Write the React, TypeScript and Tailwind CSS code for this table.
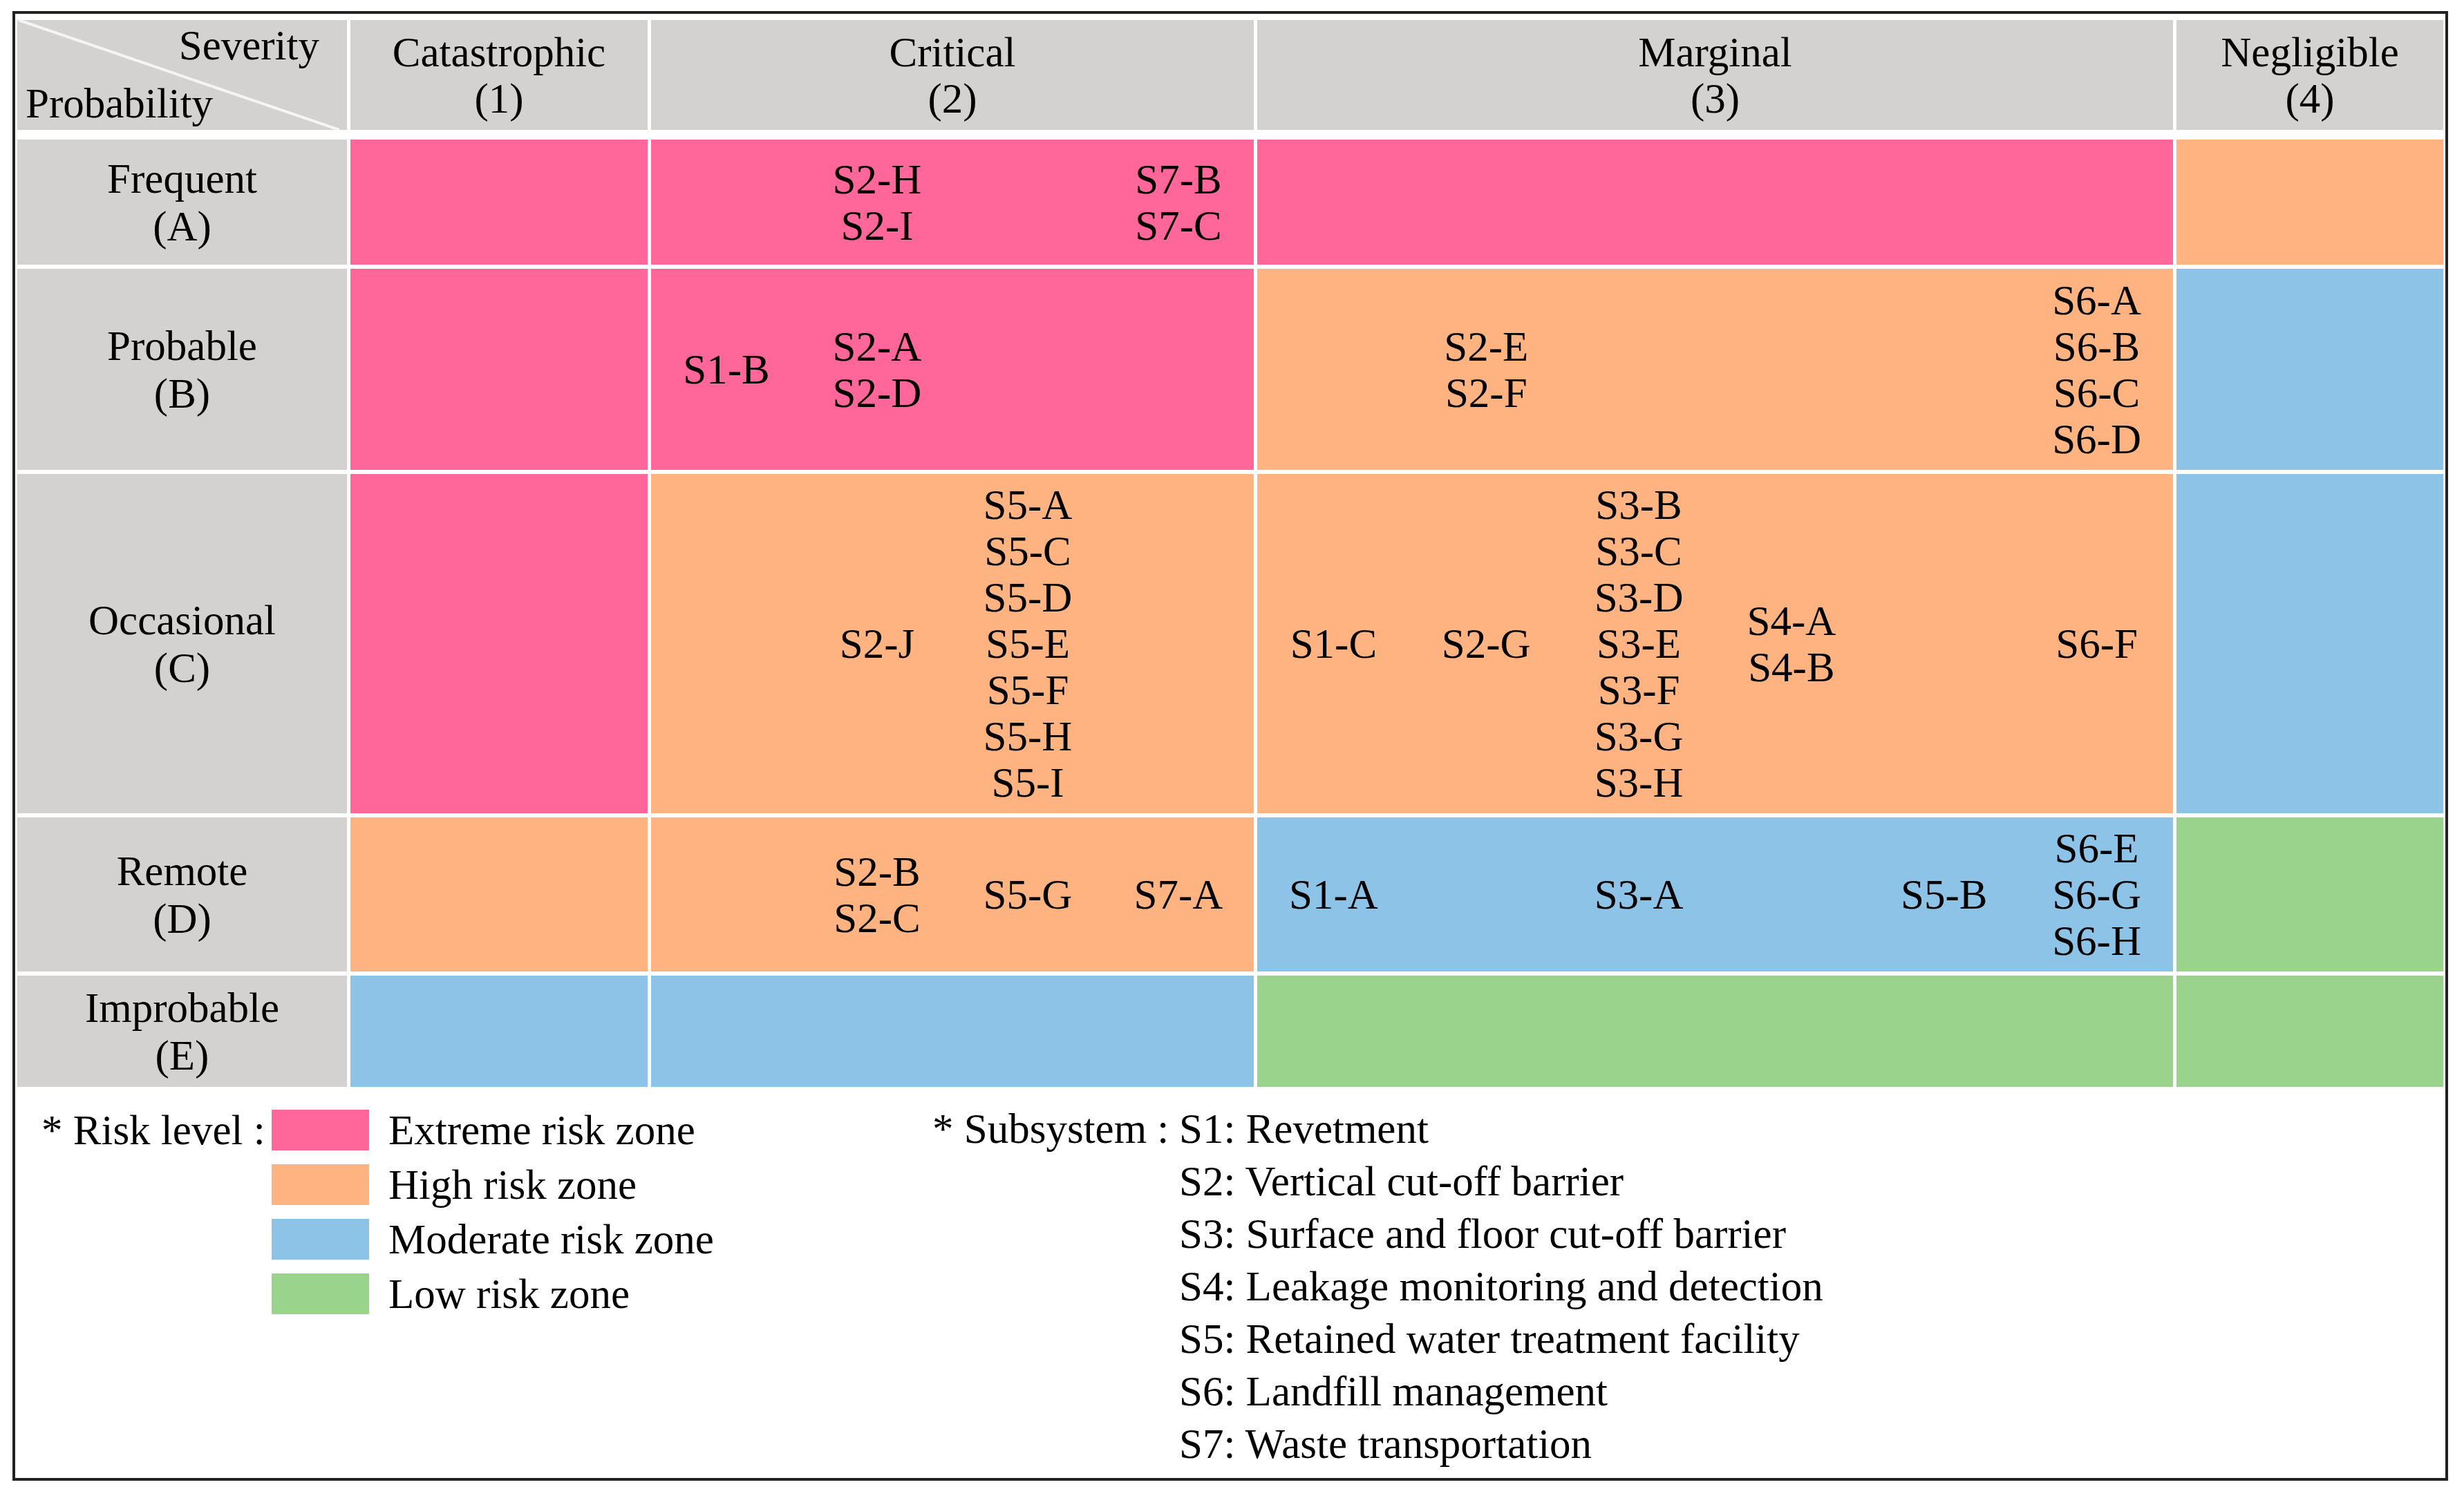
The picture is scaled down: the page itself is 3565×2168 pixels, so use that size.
import React from "react";

const PINK = "bg-[#ff6699]";
const ORANGE = "bg-[#ffb380]";
const BLUE = "bg-[#8dc3e6]";
const GREEN = "bg-[#99d38c]";
const GRAY = "bg-[#d3d2d1]";

const COLS = "grid grid-cols-[477px_430px_872px_1325px_386px] gap-x-[5px]";

type Row = {
  label: string;
  letter: string;
  cat: string;
  crit: string;
  critSubs: string[][];
  marg: string;
  margSubs: string[][];
  negl: string;
};

const rows: Row[] = [
  {
    label: "Frequent",
    letter: "(A)",
    cat: PINK,
    crit: PINK,
    critSubs: [[], ["S2-H", "S2-I"], [], ["S7-B", "S7-C"]],
    marg: PINK,
    margSubs: [[], [], [], [], [], []],
    negl: ORANGE,
  },
  {
    label: "Probable",
    letter: "(B)",
    cat: PINK,
    crit: PINK,
    critSubs: [["S1-B"], ["S2-A", "S2-D"], [], []],
    marg: ORANGE,
    margSubs: [[], ["S2-E", "S2-F"], [], [], [], ["S6-A", "S6-B", "S6-C", "S6-D"]],
    negl: BLUE,
  },
  {
    label: "Occasional",
    letter: "(C)",
    cat: PINK,
    crit: ORANGE,
    critSubs: [[], ["S2-J"], ["S5-A", "S5-C", "S5-D", "S5-E", "S5-F", "S5-H", "S5-I"], []],
    marg: ORANGE,
    margSubs: [
      ["S1-C"],
      ["S2-G"],
      ["S3-B", "S3-C", "S3-D", "S3-E", "S3-F", "S3-G", "S3-H"],
      ["S4-A", "S4-B"],
      [],
      ["S6-F"],
    ],
    negl: BLUE,
  },
  {
    label: "Remote",
    letter: "(D)",
    cat: ORANGE,
    crit: ORANGE,
    critSubs: [[], ["S2-B", "S2-C"], ["S5-G"], ["S7-A"]],
    marg: BLUE,
    margSubs: [["S1-A"], [], ["S3-A"], [], ["S5-B"], ["S6-E", "S6-G", "S6-H"]],
    negl: GREEN,
  },
  {
    label: "Improbable",
    letter: "(E)",
    cat: BLUE,
    crit: BLUE,
    critSubs: [[], [], [], []],
    marg: GREEN,
    margSubs: [[], [], [], [], [], []],
    negl: GREEN,
  },
];

const rowHeights = ["h-[181px]", "h-[291px]", "h-[491px]", "h-[223px]", "h-[161px]"];

function Sub({ items }: { items: string[] }) {
  return (
    <div className="flex flex-col items-center justify-center leading-[67px]">
      {items.map((t) => (
        <span key={t} className="whitespace-nowrap">
          {t}
        </span>
      ))}
    </div>
  );
}

function HeaderCell({ title, num }: { title: string; num: string }) {
  return (
    <div className={`${GRAY} flex flex-col items-center justify-center leading-[67px]`}>
      <span>{title}</span>
      <span>{num}</span>
    </div>
  );
}

const legend = [
  { c: PINK, t: "Extreme risk zone" },
  { c: ORANGE, t: "High risk zone" },
  { c: BLUE, t: "Moderate risk zone" },
  { c: GREEN, t: "Low risk zone" },
];

const subsystems = [
  "S1: Revetment",
  "S2: Vertical cut-off barrier",
  "S3: Surface and floor cut-off barrier",
  "S4: Leakage monitoring and detection",
  "S5: Retained water treatment facility",
  "S6: Landfill management",
  "S7: Waste transportation",
];

export default function App() {
  return (
    <div className="min-h-[2168px] w-[3565px] bg-white pt-[16px] pl-[18px] text-[61px] text-black font-['Liberation_Serif',serif]">
      <div className="w-[3524px] border-4 border-[#222] pt-[9px] px-[3px] pb-[11px]">
        {/* header */}
        <div className={`${COLS} h-[159px]`}>
          <div className={`${GRAY} relative flex flex-col justify-between pt-[3px] pb-[5px] leading-[67px]`}>
            <svg className="absolute inset-0" width="477" height="159" viewBox="0 0 477 159">
              <line x1="2" y1="0" x2="466" y2="159" stroke="#f4f4f4" strokeWidth="4" />
            </svg>
            <span className="relative self-end pr-[40px]">Severity</span>
            <span className="relative self-start pl-[12px]">Probability</span>
          </div>
          <HeaderCell title="Catastrophic" num="(1)" />
          <HeaderCell title="Critical" num="(2)" />
          <HeaderCell title="Marginal" num="(3)" />
          <HeaderCell title="Negligible" num="(4)" />
        </div>

        {/* body */}
        <div className={`${COLS} mt-[14px] gap-y-[6px]`}>
          {rows.map((r, i) => (
            <React.Fragment key={r.label}>
              <div
                className={`${GRAY} ${rowHeights[i]} flex flex-col items-center justify-center leading-[69px]`}
              >
                <span>{r.label}</span>
                <span>{r.letter}</span>
              </div>
              <div className={r.cat} />
              <div className={`${r.crit} grid grid-cols-4`}>
                {r.critSubs.map((s, j) => (
                  <Sub key={j} items={s} />
                ))}
              </div>
              <div className={`${r.marg} grid grid-cols-6`}>
                {r.margSubs.map((s, j) => (
                  <Sub key={j} items={s} />
                ))}
              </div>
              <div className={r.negl} />
            </React.Fragment>
          ))}
        </div>

        {/* legend */}
        <div className="mt-[23px] flex">
          <div className="flex w-[1324px] pl-[35px]">
            <div className="w-[333px] leading-[79px] whitespace-nowrap">* Risk level :</div>
            <div className="flex flex-col">
              {legend.map((l) => (
                <div key={l.t} className="flex h-[79px] items-center gap-[28px]">
                  <div className={`${l.c} h-[59px] w-[141px]`} />
                  <span className="whitespace-nowrap leading-[79px]">{l.t}</span>
                </div>
              ))}
            </div>
          </div>
          <div className="flex">
            <div className="w-[357px] leading-[76px] whitespace-nowrap">* Subsystem :</div>
            <div className="flex flex-col leading-[76px]">
              {subsystems.map((s) => (
                <span key={s} className="whitespace-nowrap">
                  {s}
                </span>
              ))}
            </div>
          </div>
        </div>
      </div>
    </div>
  );
}
